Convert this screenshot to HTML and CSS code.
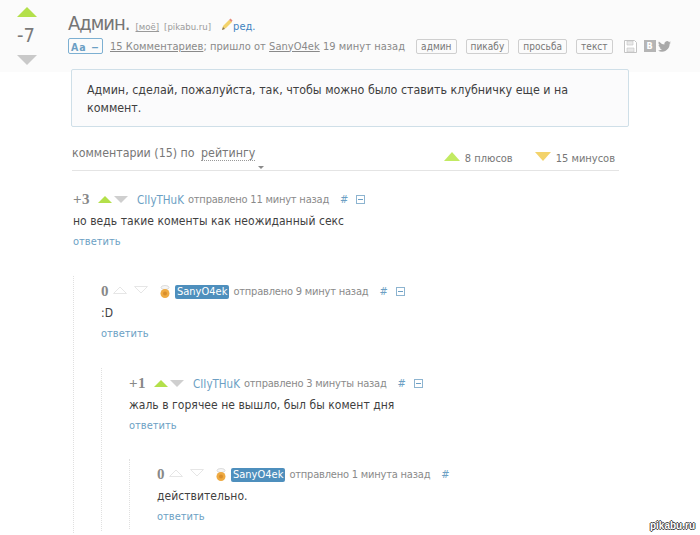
FILE: index.html
```html
<!DOCTYPE html>
<html lang="ru">
<head>
    <meta charset="UTF-8">
    <title>Админ.</title>
    <link rel="stylesheet" href="styles.css">
</head>
<body>

    <div class="story-head">
        <div class="rating">
            <div class="arrow-up"></div>
            <div class="rating-num">-7</div>
            <div class="arrow-down"></div>
        </div>
        <div class="story-info">
            <div class="title-row">
                <span class="title">Админ.</span>
                <span class="small-link first">[моё]</span>
                <span class="small-link plain">[pikabu.ru]</span>
                <svg class="pencil" width="12" height="13" viewBox="0 0 12 13">
                    <path d="M1 12l1-4 6-6 3 2-6 6z" fill="#f3d36b"/>
                    <path d="M8 2l1.500-1.500 2 2-1 1.500z" fill="#e58a7a"/>
                    <path d="M1 12l1-3 2 2z" fill="#8a7a5a"/>
                </svg>
                <span class="edit">ред.</span>
            </div>
            <div class="meta-row">
                <span class="font-btn">Aa &minus;</span>
                <span class="meta-text"><u>15 Комментариев</u>; пришло от <u>SanyO4ek</u> 19 минут назад</span>
                <span class="tag">админ</span>
                <span class="tag">пикабу</span>
                <span class="tag">просьба</span>
                <span class="tag">текст</span>
                <svg class="save" width="13" height="13" viewBox="0 0 13 13">
                    <path d="M.5.5h10l2 2v10H.5z" fill="#fff" stroke="#c4c4c4"/>
                    <path d="M3 1h6v4H3zM3 8h7v4H3z" fill="#e8e8e8" stroke="#c4c4c4" stroke-width=".6"/>
                </svg>
                <span class="vk">В</span>
                <svg class="bird" width="13" height="11" viewBox="0 0 24 20">
                    <path d="M24 2.400a9.800 9.800 0 0 1-2.800.8 5 5 0 0 0 2.200-2.700 9.800 9.800 0 0 1-3.100 1.200A4.900 4.900 0 0 0 11.900 6.100 14 14 0 0 1 1.700.9a4.900 4.900 0 0 0 1.500 6.600 4.900 4.900 0 0 1-2.200-.6c0 2.400 1.700 4.400 3.900 4.900a4.900 4.900 0 0 1-2.200.1 4.900 4.900 0 0 0 4.600 3.400A9.900 9.900 0 0 1 0 17.300 14 14 0 0 0 7.500 19.500c9.100 0 14-7.500 14-14v-.6A10 10 0 0 0 24 2.400z" fill="#a9a9a9"/>
                </svg>
            </div>
        </div>
    </div>

    <div class="story-text">Админ, сделай, пожалуйста, так, чтобы можно было ставить клубничку еще и на коммент.</div>

    <div class="comments-head">
        <div class="comments-title">комментарии (15) по <span class="sort">рейтингу</span></div>
        <div class="totals">
            <span class="total"><i class="tri-plus"></i>8 плюсов</span>
            <span class="total"><i class="tri-minus"></i>15 минусов</span>
        </div>
    </div>

    <div class="comments">
        <div class="comment">
            <div class="c-meta">
                <b class="c-score">+3</b>
                <i class="up"></i><i class="down"></i>
                <span class="c-user">CIIyTHuK</span>
                <span class="c-time">отправлено 11 минут назад</span>
                <span class="hash">#</span>
                <i class="collapse"></i>
            </div>
            <div class="c-text">но ведь такие коменты как неожиданный секс</div>
            <div class="c-reply">ответить</div>

            <div class="children">
                <div class="comment">
                    <div class="c-meta">
                        <b class="c-score">0</b>
                        <svg class="off-up" width="14" height="8" viewBox="0 0 14 8"><path d="M.5 7.500L7 1l6.500 6.500z" fill="none" stroke="#e6e6e6"/></svg>
                        <svg class="off-down" width="14" height="8" viewBox="0 0 14 8"><path d="M.5.500L7 7 13.500.500z" fill="none" stroke="#e6e6e6"/></svg>
                        <svg class="bun" width="10" height="13" viewBox="0 0 10 13">
                            <ellipse cx="5" cy="2.500" rx="4" ry="2" fill="#f6f6f6" stroke="#cfcfcf" stroke-width=".7"/>
                            <circle cx="5" cy="8.500" r="4.500" fill="#eeaa42"/>
                            <circle cx="5" cy="8.500" r="2" fill="#d98e2b"/>
                        </svg>
                        <span class="c-user me">SanyO4ek</span>
                        <span class="c-time">отправлено 9 минут назад</span>
                        <span class="hash">#</span>
                        <i class="collapse"></i>
                    </div>
                    <div class="c-text">:D</div>
                    <div class="c-reply">ответить</div>

                    <div class="children">
                        <div class="comment">
                            <div class="c-meta">
                                <b class="c-score">+1</b>
                                <i class="up"></i><i class="down"></i>
                                <span class="c-user">CIIyTHuK</span>
                                <span class="c-time">отправлено 3 минуты назад</span>
                                <span class="hash">#</span>
                                <i class="collapse"></i>
                            </div>
                            <div class="c-text">жаль в горячее не вышло, был бы комент дня</div>
                            <div class="c-reply">ответить</div>

                            <div class="children last">
                                <div class="comment">
                                    <div class="c-meta">
                                        <b class="c-score">0</b>
                                        <svg class="off-up" width="14" height="8" viewBox="0 0 14 8"><path d="M.5 7.500L7 1l6.500 6.500z" fill="none" stroke="#e6e6e6"/></svg>
                                        <svg class="off-down" width="14" height="8" viewBox="0 0 14 8"><path d="M.5.500L7 7 13.500.500z" fill="none" stroke="#e6e6e6"/></svg>
                                        <svg class="bun" width="10" height="13" viewBox="0 0 10 13">
                                            <ellipse cx="5" cy="2.500" rx="4" ry="2" fill="#f6f6f6" stroke="#cfcfcf" stroke-width=".7"/>
                                            <circle cx="5" cy="8.500" r="4.500" fill="#eeaa42"/>
                                            <circle cx="5" cy="8.500" r="2" fill="#d98e2b"/>
                                        </svg>
                                        <span class="c-user me">SanyO4ek</span>
                                        <span class="c-time">отправлено 1 минута назад</span>
                                        <span class="hash">#</span>
                                    </div>
                                    <div class="c-text">действительно.</div>
                                    <div class="c-reply">ответить</div>
                                </div>
                            </div>
                        </div>
                    </div>
                </div>
            </div>
        </div>
    </div>

    <div class="watermark">pikabu.ru</div>

</body>
</html>
```

FILE: styles.css
```css
html, body {
    height: 535px;
    overflow: hidden;
}
body {
    font-family: 'DejaVu Sans', sans-serif;
    font-stretch: condensed;
    margin: 0;
    padding: 0;
    background-color: #fff;
    color: #3f3f3f;
    position: relative;
}
.story-head {
    display: flex;
    height: 72px;
    background-color: #fbfbfb;
}
.rating {
    width: 68px;
    flex: none;
    padding-top: 7px;
    box-sizing: border-box;
}
.arrow-up {
    width: 0;
    height: 0;
    margin-left: 17px;
    border-left: 10px solid transparent;
    border-right: 10px solid transparent;
    border-bottom: 10px solid #b3e04a;
}
.arrow-down {
    width: 0;
    height: 0;
    margin-left: 17px;
    border-left: 10px solid transparent;
    border-right: 10px solid transparent;
    border-top: 10px solid #c9c9c9;
}
.rating-num {
    font-size: 20px;
    line-height: 30px;
    height: 38px;
    padding-top: 3px;
    box-sizing: border-box;
    padding-left: 17px;
    color: #7a7a7a;
}
.story-info {
    padding-top: 11px;
    white-space: nowrap;
}
.title-row {
    display: flex;
    align-items: baseline;
    height: 26px;
}
.title {
    font-size: 20px;
    letter-spacing: -1px;
    color: #757575;
    margin-right: 6px;
}
.small-link {
    font-size: 9.500px;
    color: #9a9a9a;
    margin-right: 5px;
}
.small-link.first {
    text-decoration: underline;
}
.pencil {
    margin: 0 0 0 5px;
    align-self: center;
}
.edit {
    font-size: 11px;
    color: #3d83bf;
}
.meta-row {
    display: flex;
    align-items: center;
    height: 18px;
    font-size: 11px;
    letter-spacing: .04px;
    color: #8a8a8a;
}
.font-btn {
    width: 35px;
    height: 16px;
    line-height: 16px;
    box-sizing: border-box;
    text-align: center;
    border: 1px solid #7db0d2;
    border-radius: 2px;
    color: #6c9fc4;
    font-size: 10.500px;
    font-weight: bold;
    letter-spacing: 1px;
    margin-right: 7px;
}
.meta-text {
    margin-right: 11px;
}
.tag {
    border: 1px solid #cfcfcf;
    border-radius: 2px;
    background: #fbfbfb;
    height: 13px;
    line-height: 13px;
    padding: 0 4px;
    font-size: 10px;
    margin-right: 9px;
    color: #777;
}
.save {
    margin-left: 2px;
    margin-right: 7px;
}
.vk {
    width: 12px;
    height: 12px;
    line-height: 12px;
    background: #b5b5b5;
    color: #fff;
    font-size: 9px;
    font-weight: bold;
    text-align: center;
    margin-right: 2px;
}
.story-text {
    margin: -3px 0 0 71px;
    border: 1px solid #cfdfe8;
    border-radius: 2px;
    background: #fbfbfc;
    font-size: 12.350px;
    line-height: 18px;
    height: 36px;
    padding: 11px 15px 9px;
    width: 526px;
}
.comments-head {
    margin: 12px 0 0 72px;
    width: 547px;
    height: 32px;
    padding-bottom: 4px;
    box-sizing: border-box;
    border-bottom: 1px solid #e4e4e4;
    display: flex;
    justify-content: space-between;
    align-items: center;
    position: relative;
}
.comments-head::after {
    content: "";
    position: absolute;
    left: 186px;
    bottom: 1px;
    border-left: 3px solid transparent;
    border-right: 3px solid transparent;
    border-top: 3px solid #8a8a8a;
}
.comments-title {
    font-size: 12.300px;
    color: #777;
}
.sort {
    border-bottom: 1px dotted #999;
    margin-left: 3px;
}
.totals {
    display: flex;
    gap: 22px;
    font-size: 11px;
    color: #777;
    padding: 11px 4px 0 0;
}
.tri-plus, .tri-minus {
    display: inline-block;
    width: 0;
    height: 0;
    margin-right: 5px;
    border-left: 8px solid transparent;
    border-right: 8px solid transparent;
    vertical-align: 1px;
}
.tri-plus {
    border-bottom: 9px solid #c2ea62;
}
.tri-minus {
    border-top: 9px solid #f3d36b;
}
.comments {
    margin: 18px 0 0 73px;
}
.c-meta {
    display: flex;
    align-items: center;
    height: 21px;
    font-size: 11px;
    color: #8a8a8a;
    white-space: nowrap;
}
.c-score {
    font-family: 'Liberation Serif', serif;
    font-size: 15px;
    letter-spacing: .5px;
    color: #888;
    margin-right: 8px;
}
.up, .down {
    width: 0;
    height: 0;
    border-left: 7px solid transparent;
    border-right: 7px solid transparent;
    margin-right: 2px;
}
.up {
    border-bottom: 7px solid #b3e04a;
}
.down {
    border-top: 7px solid #cfcfcf;
}
.off-up, .off-down {
    margin-bottom: 4px;
}
.off-up {
    margin-left: -4px;
}
.off-down {
    margin-left: 7px;
}
.c-user {
    font-size: 11.500px;
    color: #6c9fc4;
    margin: 0 4px 0 7px;
}
.c-user.me {
    background: #4e8fbd;
    color: #fff;
    border-radius: 2px;
    font-size: 11px;
    line-height: 14px;
    padding: 0 2px;
    margin-left: 5px;
}
.c-time {
    letter-spacing: -.2px;
}
.bun {
    margin-left: 12px;
}
.hash {
    color: #6c9fc4;
    margin: 0 8px 0 11px;
}
.collapse {
    width: 7px;
    height: 7px;
    border: 1px solid #8db4d0;
}
.collapse::after {
    content: "";
    display: block;
    width: 5px;
    height: 1px;
    background: #6c9fc4;
    margin: 3px 1px;
}
.c-text {
    font-size: 12px;
    letter-spacing: .04px;
    height: 21px;
    line-height: 23px;
    color: #3f3f3f;
}
.c-reply {
    font-size: 11px;
    height: 21px;
    line-height: 21px;
    color: #6c9fc4;
}
.children {
    margin-top: 24px;
    padding: 5px 0 2px 27px;
    border-left: 1px dotted #e0e0e0;
}
.children.last {
    margin-top: 23px;
}
.watermark {
    position: absolute;
    right: 5px;
    bottom: 4px;
    font-family: 'Liberation Sans', sans-serif;
    font-size: 10px;
    font-weight: bold;
    color: #fff;
    text-shadow: -1px 0 #444, 1px 0 #444, 0 -1px #444, 0 1px #444;
}
```
